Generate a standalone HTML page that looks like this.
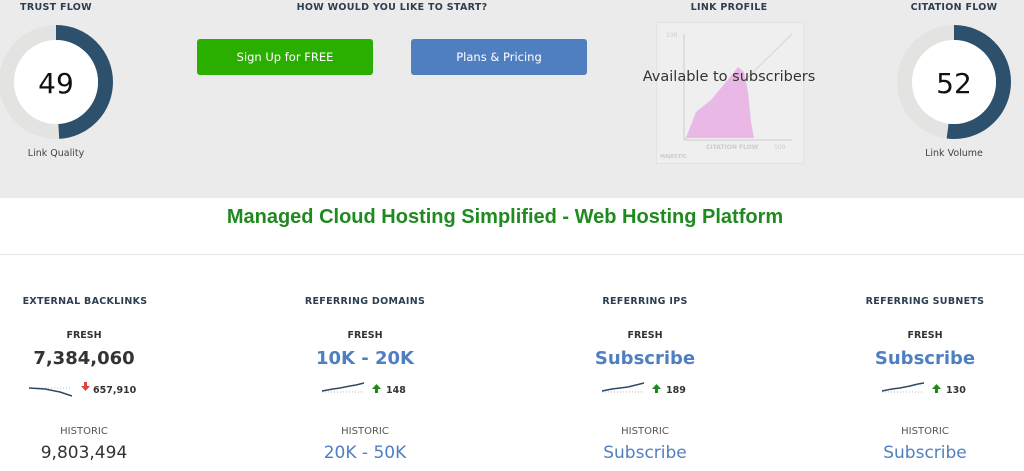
<!DOCTYPE html>
<html><head><meta charset="utf-8"><style>
*{margin:0;padding:0;box-sizing:border-box}
body{width:1024px;height:471px;overflow:hidden;background:#fff;font-family:"DejaVu Sans","Liberation Sans",sans-serif;position:relative}
.top{position:absolute;left:0;top:0;width:1024px;height:198px;background:#ebebeb}
.a{position:absolute;text-align:center;white-space:nowrap;transform:translateX(-50%)}
.h{font-size:9.5px;font-weight:bold;color:#2c3e50;letter-spacing:.3px}
.btn{position:absolute;top:39px;width:176px;height:36px;border-radius:3px;color:#fff;font-size:11.5px;line-height:36px;text-align:center}
.sub{font-size:9.5px;color:#444}
.fresh{font-size:9.5px;font-weight:bold;color:#333}
.big{font-size:18px;font-weight:bold}
.hist{font-size:10px;color:#555}
.hv{font-size:17px}
.blue{color:#4f7fc1}
</style></head><body>
<div class="top"></div>
<div class="a h" style="left:56px;top:2px">TRUST FLOW</div>
<div class="a h" style="left:392px;top:2px">HOW WOULD YOU LIKE TO START?</div>
<div class="a h" style="left:729px;top:2px">LINK PROFILE</div>
<div class="a h" style="left:954px;top:2px">CITATION FLOW</div>

<svg style="position:absolute;left:0;top:24px" width="115" height="116">
<circle cx="56" cy="58" r="49.5" fill="none" stroke="#e3e3e1" stroke-width="15"/>
<circle cx="56" cy="58" r="49.5" fill="none" stroke="#2d506c" stroke-width="15" stroke-dasharray="152.4 400" transform="rotate(-90 56 58)"/>
<circle cx="56" cy="58" r="42" fill="#fff"/>
<text x="56" y="69" text-anchor="middle" font-family="DejaVu Sans" font-size="28" fill="#111">49</text>
</svg>
<div class="a sub" style="left:56px;top:148px">Link Quality</div>

<svg style="position:absolute;left:897px;top:24px" width="115" height="116">
<circle cx="57" cy="58" r="49.5" fill="none" stroke="#e3e3e1" stroke-width="15"/>
<circle cx="57" cy="58" r="49.5" fill="none" stroke="#2d506c" stroke-width="15" stroke-dasharray="161.7 400" transform="rotate(-90 57 58)"/>
<circle cx="57" cy="58" r="42" fill="#fff"/>
<text x="57" y="69" text-anchor="middle" font-family="DejaVu Sans" font-size="28" fill="#111">52</text>
</svg>
<div class="a sub" style="left:954px;top:148px">Link Volume</div>

<div class="btn" style="left:197px;background:#2aae00">Sign Up for FREE</div>
<div class="btn" style="left:411px;background:#4f7fc1">Plans &amp; Pricing</div>

<svg style="position:absolute;left:656px;top:22px" width="148" height="142">
<rect x="0.5" y="0.5" width="147" height="141" fill="#efefef" stroke="#e2e2e2"/>
<line x1="28" y1="12" x2="28" y2="118" stroke="#ccc"/>
<line x1="28" y1="118" x2="136" y2="118" stroke="#ccc"/>
<line x1="28" y1="118" x2="136" y2="12" stroke="#d4d4d4"/>
<polygon points="30,116 40,90 55,78 70,60 82,45 88,50 92,70 95,100 98,116" fill="#e9b8e6"/>
<text x="10" y="15" font-size="6" fill="#ccc">100</text>
<text x="50" y="127" font-size="6" fill="#ccc" font-weight="bold">CITATION FLOW</text>
<text x="118" y="127" font-size="6" fill="#ccc">100</text>
<text x="4" y="136" font-size="5" fill="#ccc" font-weight="bold">MAJESTIC</text>
</svg>
<div class="a" style="left:729px;top:69px;font-size:14.5px;color:#333;font-family:'DejaVu Sans',sans-serif">Available to subscribers</div>

<div class="a" style="left:505px;top:206px;font-family:'Liberation Sans',sans-serif;font-size:20px;font-weight:bold;color:#1f8a1f">Managed Cloud Hosting Simplified - Web Hosting Platform</div>
<div style="position:absolute;left:0;top:254px;width:1024px;height:1px;background:#e6e6e6"></div>

<div class="a h" style="left:85px;top:296px">EXTERNAL BACKLINKS</div>
<div class="a h" style="left:365px;top:296px">REFERRING DOMAINS</div>
<div class="a h" style="left:645px;top:296px">REFERRING IPS</div>
<div class="a h" style="left:925px;top:296px">REFERRING SUBNETS</div>

<div class="a fresh" style="left:84px;top:330px">FRESH</div>
<div class="a fresh" style="left:365px;top:330px">FRESH</div>
<div class="a fresh" style="left:645px;top:330px">FRESH</div>
<div class="a fresh" style="left:925px;top:330px">FRESH</div>

<div class="a big" style="left:84px;top:348px;color:#333">7,384,060</div>
<div class="a big blue" style="left:365px;top:348px">10K - 20K</div>
<div class="a big blue" style="left:645px;top:348px">Subscribe</div>
<div class="a big blue" style="left:925px;top:348px">Subscribe</div>

<svg style="position:absolute;left:0;top:378px" width="1024" height="30" font-family="DejaVu Sans" font-size="9.5" font-weight="bold" fill="#333">
<g stroke-dasharray="1 2" stroke="#bbb"><line x1="30" y1="10" x2="72" y2="10"/><line x1="322" y1="14" x2="364" y2="14"/><line x1="602" y1="14" x2="644" y2="14"/><line x1="882" y1="14" x2="924" y2="14"/></g>
<g fill="none" stroke="#2d4a66" stroke-width="1.5">
<polyline points="29,10 45,11 60,14 72,18"/>
<polyline points="322,13 333,11 340,10 345,9 350,8 356,7 364,5"/>
<polyline points="602,13 612,11 620,10 628,9 636,7 644,5"/>
<polyline points="882,13 892,11 900,10 910,8 918,6 924,5"/>
</g>
<path d="M84,4 h3 v4 h3 l-4.5,5 l-4.5,-5 h3z" fill="#e04040"/>
<text x="93" y="15">657,910</text>
<path d="M375,15 h3 v-4 h3 l-4.5,-5 l-4.5,5 h3z" fill="#1a8a1a"/>
<text x="386" y="15">148</text>
<path d="M655,15 h3 v-4 h3 l-4.5,-5 l-4.5,5 h3z" fill="#1a8a1a"/>
<text x="666" y="15">189</text>
<path d="M935,15 h3 v-4 h3 l-4.5,-5 l-4.5,5 h3z" fill="#1a8a1a"/>
<text x="946" y="15">130</text>
</svg>

<div class="a hist" style="left:84px;top:426px">HISTORIC</div>
<div class="a hist" style="left:365px;top:426px">HISTORIC</div>
<div class="a hist" style="left:645px;top:426px">HISTORIC</div>
<div class="a hist" style="left:925px;top:426px">HISTORIC</div>

<div class="a hv" style="left:84px;top:443px;color:#333">9,803,494</div>
<div class="a hv blue" style="left:365px;top:443px">20K - 50K</div>
<div class="a hv blue" style="left:645px;top:443px">Subscribe</div>
<div class="a hv blue" style="left:925px;top:443px">Subscribe</div>
</body></html>
